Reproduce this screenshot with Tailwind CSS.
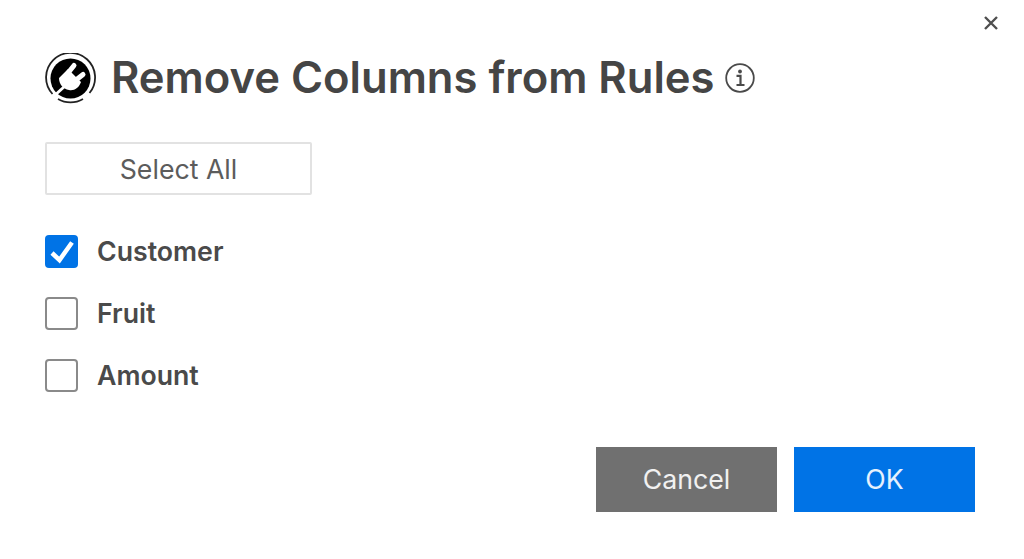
<!DOCTYPE html>
<html>
<head>
<meta charset="utf-8">
<script src="https://cdn.jsdelivr.net/npm/@tailwindcss/browser@4"></script>
</head>
<body class="bg-white">
<div class="relative w-[1024px] h-[559px] overflow-hidden bg-white font-['Inter','Liberation_Sans',sans-serif] text-[#4a4a4a] pt-[52px] pl-[45px] pr-[49px] flex flex-col">
  <button class="absolute left-[982px] top-[14px] w-[18px] h-[18px] flex items-center justify-center" aria-label="Close">
    <svg width="18" height="18" viewBox="0 0 18 18" fill="none" stroke="#4f4f4f" stroke-width="2.400"><path d="M3 3L15 15M15 3L3 15"/></svg>
  </button>
  <div class="flex items-center h-[52px]">
    <svg width="51" height="51" viewBox="0 0 51 51" class="shrink-0">
      <path d="M7.500 41A24.500 24.500 0 1 1 44.500 40" fill="none" stroke="#222" stroke-width="1.800"/>
      <path d="M13 46A24.500 24.500 0 0 0 38 46" fill="none" stroke="#222" stroke-width="1.800"/>
      <circle cx="25.500" cy="25.500" r="20" fill="#000"/>
      <path d="M14 25L23 16L36 29C34 35 29 38 24 37C18 36 14 31 14 25Z" fill="#fff"/>
      <path d="M23 20L29 12.500M31 27L38 21.500" stroke="#fff" stroke-width="5" stroke-linecap="round" fill="none"/>
      <path d="M20 33L9 43" stroke="#fff" stroke-width="3" fill="none"/>
    </svg>
    <h1 class="ml-[15px] text-[43.550px] leading-[52px] font-semibold text-[#454545] whitespace-nowrap">Remove Columns from Rules</h1>
    <svg width="30" height="30" viewBox="0 0 30 30" fill="none" class="ml-[10px] shrink-0">
      <circle cx="15" cy="15" r="13.800" stroke="#4a4a4a" stroke-width="1.800"/>
      <circle cx="15" cy="8.500" r="1.900" fill="#4a4a4a"/>
      <path d="M11.500 12.800H15.500V21.500M11.500 22H19.500" stroke="#4a4a4a" stroke-width="2.200"/>
    </svg>
  </div>
  <button class="mt-[38px] w-[267px] h-[53px] rounded-[2px] border-2 border-[#e2e2e2] bg-white text-[26.700px] leading-[53px] text-[#5c5c5c] flex items-center justify-center pt-[1px]">Select All</button>
  <div class="mt-[40px] flex flex-col gap-[29px]">
    <label class="flex items-center gap-[19px] h-[33px]">
      <svg width="33" height="33" viewBox="0 0 33 33" fill="none" class="shrink-0 rounded-[4px] bg-[#0073e6]">
        <path d="M7 18L14.500 25L27 7.500" stroke="#fff" stroke-width="4.500"/>
      </svg>
      <span class="text-[26.700px] font-semibold">Customer</span>
    </label>
    <label class="flex items-center gap-[19px] h-[33px]">
      <span class="w-[33px] h-[33px] rounded-[4px] border-2 border-[#8a8a8a] bg-white"></span>
      <span class="text-[26.700px] font-semibold">Fruit</span>
    </label>
    <label class="flex items-center gap-[19px] h-[33px]">
      <span class="w-[33px] h-[33px] rounded-[4px] border-2 border-[#8a8a8a] bg-white"></span>
      <span class="text-[26.700px] font-semibold">Amount</span>
    </label>
  </div>
  <div class="mt-[55px] flex justify-end gap-[17px]">
    <button class="w-[181px] h-[65px] bg-[#707070] text-white/90 text-[26.700px]">Cancel</button>
    <button class="w-[181px] h-[65px] bg-[#0073e6] text-white/90 text-[26.700px]">OK</button>
  </div>
</div>
</body>
</html>
